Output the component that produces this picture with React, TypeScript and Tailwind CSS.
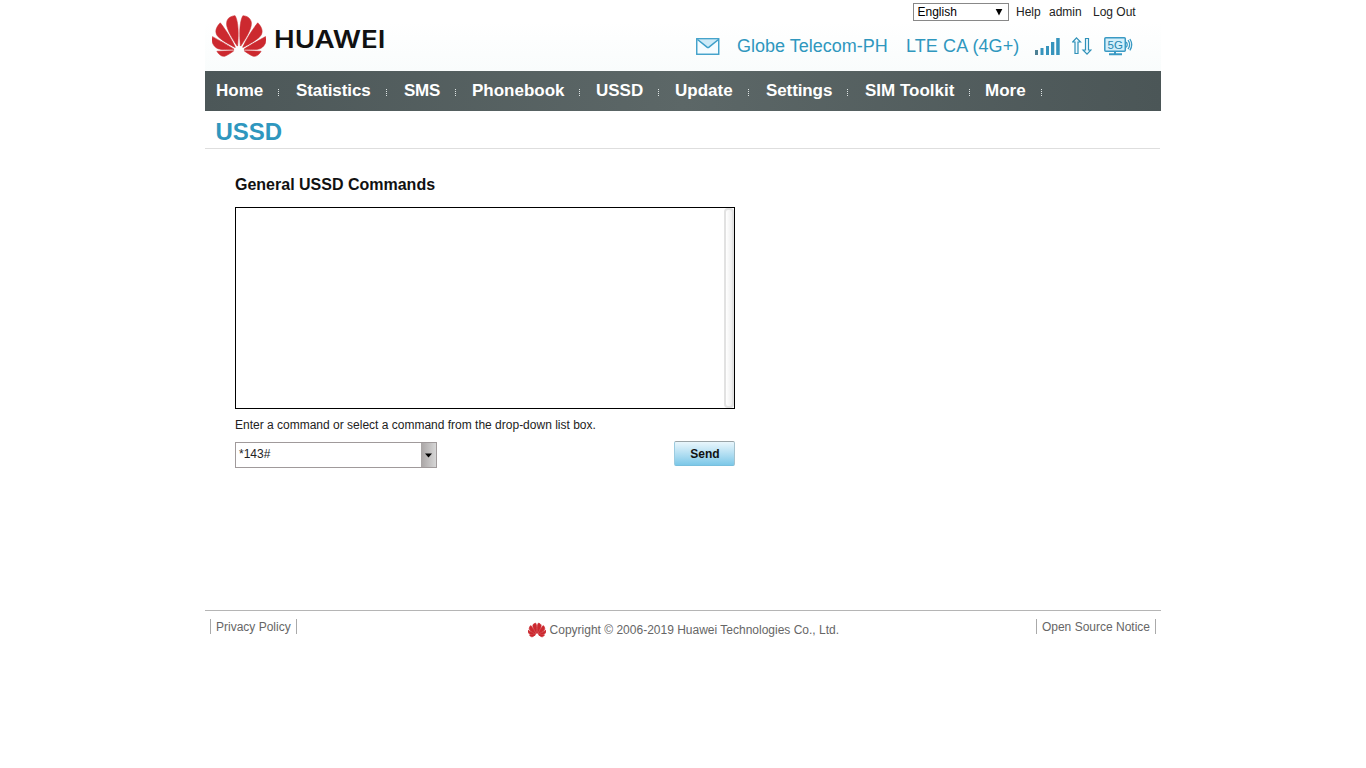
import React from 'react';
import { SiHuawei } from 'react-icons/si';

const NAV = [
  { label: 'Home', cell: 'w-[62px]', gap: 'w-[18px]' },
  { label: 'Statistics', cell: 'w-[90px] tracking-[-0.1px]', gap: 'w-[18px]' },
  { label: 'SMS', cell: 'w-[51px] tracking-[-0.3px]', gap: 'w-[17px]' },
  { label: 'Phonebook', cell: 'w-[107px]', gap: 'w-[17px]' },
  { label: 'USSD', cell: 'w-[62px]', gap: 'w-[17px]' },
  { label: 'Update', cell: 'w-[73px]', gap: 'w-[18px]' },
  { label: 'Settings', cell: 'w-[81px] tracking-[-0.1px]', gap: 'w-[18px]' },
  { label: 'SIM Toolkit', cell: 'w-[104px]', gap: 'w-[16px]' },
  { label: 'More', cell: 'w-[56px]', gap: 'w-[17px]' },
];

function Dots() {
  return (
    <span className="flex h-2 flex-col justify-between">
      {[0, 1, 2, 3].map((i) => (
        <i key={i} className="block h-px w-px bg-[#dfe5e5]" />
      ))}
    </span>
  );
}

function Envelope() {
  return (
    <svg width="24" height="17" viewBox="0 0 24 17" fill="none" stroke="#3d9fc9">
      <rect x="0.75" y="0.75" width="22" height="15.5" strokeWidth="1.4" fill="#f5fcff" />
      <path d="M2 2h20l-10 8z" fill="#cdeaf7" stroke="none" />
      <path d="M1.5 1.5 11 9.2q1 .7 2 0L22.5 1.5" strokeWidth="1.5" />
    </svg>
  );
}

function Signal() {
  return (
    <svg width="26" height="18" viewBox="0 0 26 18" fill="#3694bd">
      <rect x="0" y="13" width="3" height="5" fill="#4c8094" />
      <rect x="5.5" y="11" width="3" height="7" />
      <rect x="11" y="9" width="3" height="9" />
      <rect x="16" y="5" width="3.3" height="13" />
      <rect x="21.2" y="1" width="3.5" height="17" />
    </svg>
  );
}

function Transfer() {
  return (
    <svg width="20" height="18" viewBox="0 0 20 18" fill="#effaff" stroke="#2f91b8" strokeWidth="1.2" strokeLinejoin="miter">
      <path d="M4.5.9 8.5 5H6v11.5H3V5H.7z" />
      <path d="M15 17.1 11 13h2.5V1.5h3V13H19z" />
    </svg>
  );
}

function Device5G() {
  return (
    <svg width="30" height="19" viewBox="0 0 30 19" fill="none" stroke="#3a9ac4">
      <rect x="0.8" y="0.8" width="20.5" height="13.4" rx="1" strokeWidth="1.5" fill="#d3effa" />
      <path d="M11 14v3M5 17.3h13" strokeWidth="2" />
      <path d="M22.2 5q2 2.6 0 5.4M24 3.2q3.2 4.4 0 9M25.9 2q3.6 5.6 0 11.4" strokeWidth="1.3" />
      <text x="11.2" y="11.6" textAnchor="middle" fontFamily="Liberation Sans" fontSize="11.5" fill="#2588b2" stroke="none">5G</text>
    </svg>
  );
}

export default function App() {
  return (
    <div className="flex h-[768px] w-[1366px] flex-col overflow-hidden bg-white pl-[205px] font-['Liberation_Sans',Arial,sans-serif] text-[12px] leading-[14px] text-[#222]">
      <header className="flex h-[71px] w-[956px] justify-between bg-linear-to-b from-white from-30% to-[#f9fcfc]">
        <div className="flex pl-[7px]">
          <SiHuawei size={54} color="#cc292f" stroke="#cc292f" strokeWidth="0.25" className="mt-[8.5px] shrink-0" />
          <svg className="mt-[26px] ml-[6.5px] shrink-0" width="122" height="28" viewBox="0 0 122 28">
            <text x="1" y="22" textLength="111.5" lengthAdjust="spacingAndGlyphs" fontFamily="Inter" fontWeight="600" fontSize="24" fill="#111">HUAWEI</text>
          </svg>
        </div>
        <div className="flex w-[465px] flex-col">
          <div className="flex h-[22px] pt-[3px] pl-[217px]">
            <div className="flex h-[18px] w-24 shrink-0 items-center justify-between border border-[#888] bg-white pr-[5px] pl-[3.5px] text-black">
              <span>English</span>
              <svg width="8" height="7" viewBox="0 0 8 7"><path d="M.7 0h6.6L4 6.5z" /></svg>
            </div>
            <span className="mt-[2px] ml-[7px] w-[33px] shrink-0">Help</span>
            <span className="mt-[2px] w-[44px] shrink-0">admin</span>
            <span className="mt-[2px] shrink-0 whitespace-nowrap">Log Out</span>
          </div>
          <div className="flex h-12 items-center whitespace-nowrap text-[18px] leading-5 text-[#2f97be]">
            <span className="flex w-[41px] shrink-0"><Envelope /></span>
            <span className="w-[169px] shrink-0">Globe Telecom-PH</span>
            <span className="w-[129px] shrink-0 tracking-[0.1px]">LTE CA (4G+)</span>
            <span className="flex w-[37px] shrink-0"><Signal /></span>
            <span className="flex w-8 shrink-0"><Transfer /></span>
            <Device5G />
          </div>
        </div>
      </header>

      <nav className="flex h-10 w-[956px] items-center bg-linear-to-r from-[#4c5758] via-[#5c6767] to-[#4b5657] pl-[11px]">
        {NAV.map((n) => (
          <div key={n.label} className="flex items-center">
            <a className={`${n.cell} pb-px text-[17px] leading-5 font-bold whitespace-nowrap text-white`}>{n.label}</a>
            <span className={`${n.gap} pt-[3px]`}><Dots /></span>
          </div>
        ))}
      </nav>

      <h1 className="h-[38px] w-[955px] border-b border-[#dedede] pt-[7px] pl-[10.5px] text-[24px] leading-[28px] font-bold text-[#2f97be]">USSD</h1>

      <main className="h-[461px] w-[530px] pt-[26px] pl-[30px]">
        <h2 className="h-8 text-[16px] leading-[19px] font-bold text-[#111]">General USSD Commands</h2>
        <div className="flex h-[202px] justify-end border border-black bg-white">
          <div className="w-[10px] rounded-[4px] border-2 border-[#e2e2e2] bg-linear-to-r from-white to-[#eeeeee]" />
        </div>
        <p className="mt-[9px] leading-[14px]">Enter a command or select a command from the drop-down list box.</p>
        <div className="mt-[9px] flex justify-between">
          <div className="mt-px flex h-[26px] w-[202px] border border-[#a09a9b] bg-white">
            <span className="flex-1 pt-1 pl-[3px]">*143#</span>
            <span className="flex w-[15px] items-center justify-center bg-linear-to-r from-[#a9a5a5] to-[#d6d6d6]">
              <svg width="7" height="5" viewBox="0 0 7 5"><path d="M0 .5h7L3.5 4.5z" /></svg>
            </span>
          </div>
          <button className="h-[25px] w-[61px] rounded-[2px] border border-t-[#9aa4a8] border-r-[#a5c2cd] border-b-[#79bfdd] border-l-[#9bcbe0] bg-linear-to-b from-[#e9f6fc] to-[#7cc8e8] pl-px font-bold text-[#111]">Send</button>
        </div>
      </main>

      <footer className="flex w-[956px] justify-between border-t border-[#b5b5b5] pt-2 pr-[5px] pl-[5px] text-[#666]">
        <span className="h-[15px] border-x border-[#aaa] px-[5px] leading-[17px]">Privacy Policy</span>
        <span className="mt-1 flex pl-[34px]">
          <SiHuawei size={18} color="#cc292f" stroke="#cc292f" strokeWidth="1.1" className="mr-1 -mt-0.5" />
          Copyright © 2006-2019 Huawei Technologies Co., Ltd.
        </span>
        <span className="h-[15px] border-x border-[#aaa] px-[5px] leading-[17px]">Open Source Notice</span>
      </footer>
    </div>
  );
}
